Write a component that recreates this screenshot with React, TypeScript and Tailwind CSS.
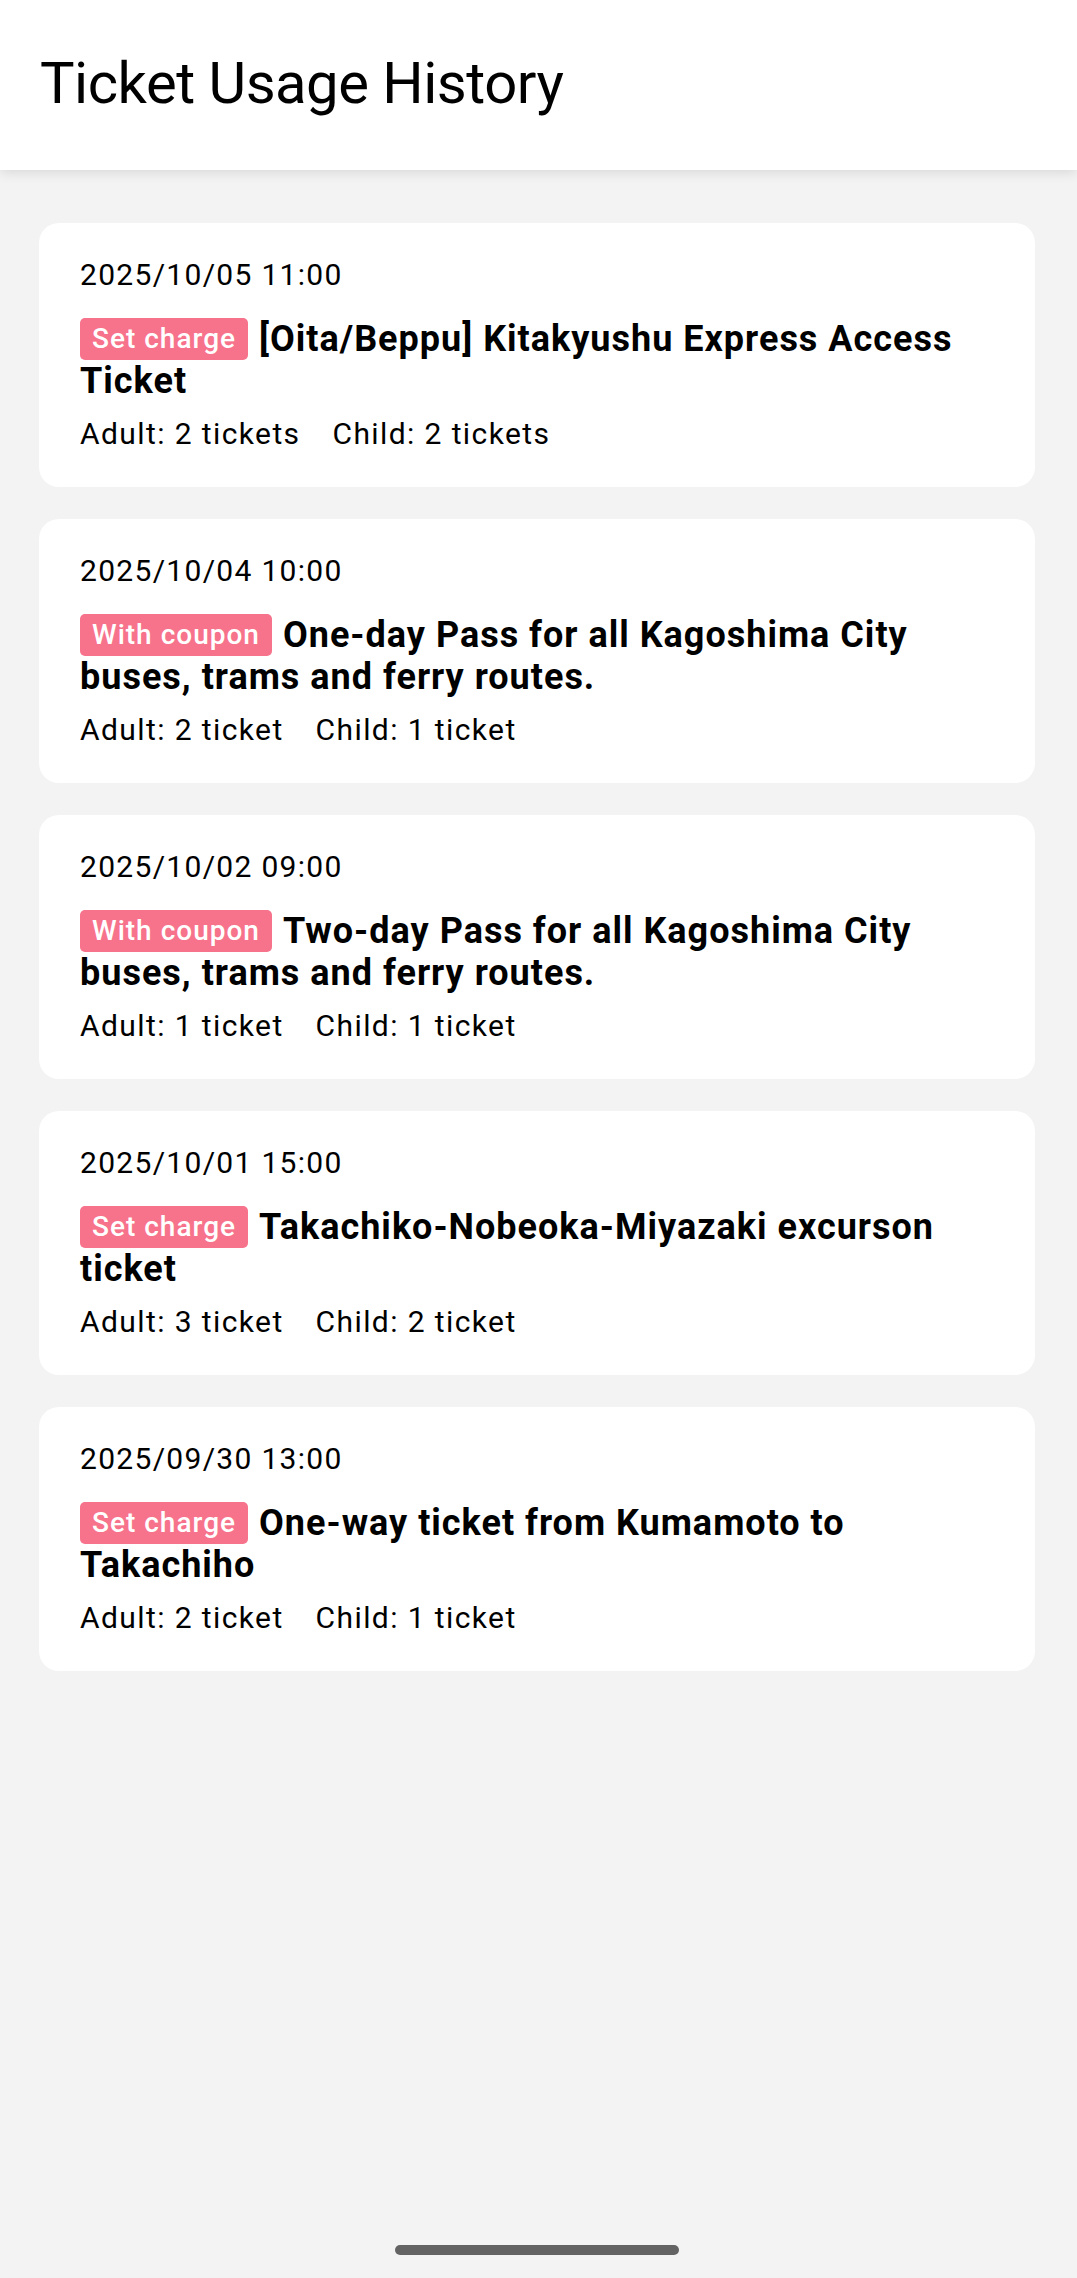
import React from "react";

type Item = {
  date: string;
  badge: string;
  title: string;
  adult: string;
  child: string;
};

const items: Item[] = [
  {
    date: "2025/10/05 11:00",
    badge: "Set charge",
    title: "[Oita/Beppu] Kitakyushu Express Access Ticket",
    adult: "Adult: 2 tickets",
    child: "Child: 2 tickets",
  },
  {
    date: "2025/10/04 10:00",
    badge: "With coupon",
    title: "One-day Pass for all Kagoshima City buses, trams and ferry routes.",
    adult: "Adult: 2 ticket",
    child: "Child: 1 ticket",
  },
  {
    date: "2025/10/02 09:00",
    badge: "With coupon",
    title: "Two-day Pass for all Kagoshima City buses, trams and ferry routes.",
    adult: "Adult: 1 ticket",
    child: "Child: 1 ticket",
  },
  {
    date: "2025/10/01 15:00",
    badge: "Set charge",
    title: "Takachiko-Nobeoka-Miyazaki excurson ticket",
    adult: "Adult: 3 ticket",
    child: "Child: 2 ticket",
  },
  {
    date: "2025/09/30 13:00",
    badge: "Set charge",
    title: "One-way ticket from Kumamoto to Takachiho",
    adult: "Adult: 2 ticket",
    child: "Child: 1 ticket",
  },
];

function Card({ item }: { item: Item }) {
  return (
    <div className="bg-white rounded-[20px] pl-[41px] pr-[41px] pt-[32px] pb-[33px] text-black">
      <div className="text-[30px] leading-[40px] tracking-[1.3px]">{item.date}</div>
      <div className="mt-[23px] text-[36px] leading-[42px] font-bold tracking-[1px]">
        <span className="inline-block align-top h-[42px] leading-[42px] px-[12px] rounded-[5px] bg-[#f7728b] text-white text-[28px] font-medium tracking-[1px] mr-[11px]">
          {item.badge}
        </span>
        {item.title}
      </div>
      <div className="mt-[12px] text-[30px] leading-[40px] tracking-[1.4px] flex gap-[32px]">
        <span>{item.adult}</span>
        <span>{item.child}</span>
      </div>
    </div>
  );
}

export default function App() {
  return (
    <div
      className="w-[1077px] h-[2278px] bg-[#f3f3f3] flex flex-col relative overflow-hidden"
      style={{ fontFamily: "Roboto, 'Noto Sans', sans-serif" }}
    >
      <header className="h-[170px] bg-white flex items-center pl-[40px] shadow-[0_2px_12px_rgba(0,0,0,0.12)] relative z-10">
        <h1 className="text-[58px] leading-none font-normal tracking-[-0.5px] text-black -mt-[4px]">Ticket Usage History</h1>
      </header>
      <main className="flex flex-col gap-[32px] pt-[53px] pl-[39px] pr-[42px]">
        {items.map((it, i) => (
          <Card key={i} item={it} />
        ))}
      </main>
      <div className="absolute bottom-[23px] left-[395px] w-[284px] h-[10px] rounded-full bg-[#636363]" />
    </div>
  );
}
